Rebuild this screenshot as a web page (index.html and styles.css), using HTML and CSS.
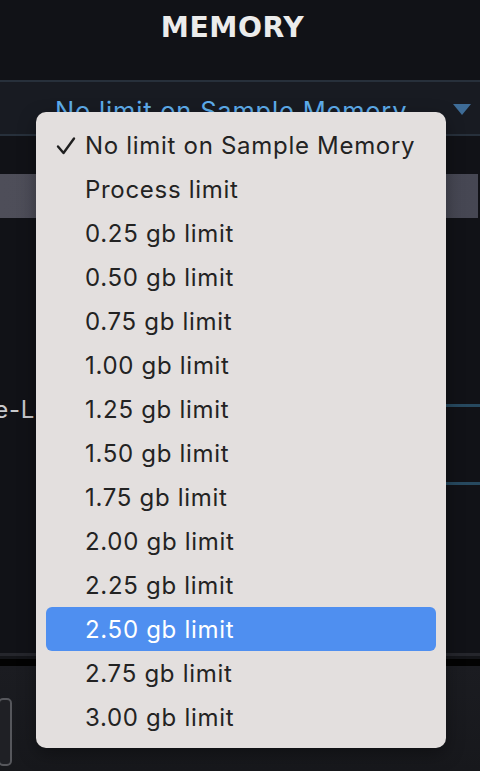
FILE: index.html
```html
<!DOCTYPE html>
<html>
<head>
<meta charset="utf-8">
<link rel="stylesheet" href="styles.css">
</head>
<body>
<div class="panel">
  <header class="header"><h1 class="title">MEMORY</h1></header>
  <div class="select-row">
    <span class="select-value">No limit on Sample Memory</span>
    <svg class="select-arrow" width="18" height="11" viewBox="0 0 18 11"><path d="M0 0 H18 L9 11 Z" fill="#3e6c97"/></svg>
  </div>
  <div class="gap-top"></div>
  <div class="section-bar"></div>
  <div class="settings">
    <div class="setting-row first">
      <span class="setting-label">Pre-Load</span>
      <span class="setting-field"></span>
    </div>
    <div class="setting-row">
      <span class="setting-label"></span>
      <span class="setting-field"></span>
    </div>
  </div>
  <div class="footer">
    <div class="footer-rule"></div>
    <div class="footer-shadow"></div>
    <div class="footer-body"><span class="footer-button"></span></div>
  </div>
</div>

<ul class="menu">
  <li class="menu-item checked"><svg class="check" width="20" height="20" viewBox="0 0 20 20"><path d="M2 10.5 L7.5 17 L18 2.5" fill="none" stroke="#1f1f1f" stroke-width="2.4" stroke-linecap="round" stroke-linejoin="round"/></svg>No limit on Sample Memory</li>
  <li class="menu-item">Process limit</li>
  <li class="menu-item">0.25 gb limit</li>
  <li class="menu-item">0.50 gb limit</li>
  <li class="menu-item">0.75 gb limit</li>
  <li class="menu-item">1.00 gb limit</li>
  <li class="menu-item">1.25 gb limit</li>
  <li class="menu-item">1.50 gb limit</li>
  <li class="menu-item">1.75 gb limit</li>
  <li class="menu-item">2.00 gb limit</li>
  <li class="menu-item">2.25 gb limit</li>
  <li class="menu-item active">2.50 gb limit</li>
  <li class="menu-item">2.75 gb limit</li>
  <li class="menu-item">3.00 gb limit</li>
</ul>
</body>
</html>
```

FILE: styles.css
```css
html, body {
  margin: 0;
  padding: 0;
  width: 480px;
  height: 771px;
  overflow: hidden;
  background: #111217;
}

.panel {
  display: flex;
  flex-direction: column;
  height: 771px;
}

/* title bar */
.header {
  height: 80px;
  display: flex;
  justify-content: center;
  align-items: flex-start;
  padding-right: 15px;
  background: #111217;
}

.title {
  margin: 12px 0 0 0;
  font-family: "DejaVu Sans", sans-serif;
  font-weight: 700;
  font-size: 29px;
  line-height: 30px;
  letter-spacing: 0.5px;
  color: #ececec;
  transform: scaleX(0.975);
}

/* the closed popup button */
.select-row {
  height: 52px;
  border-top: 2px solid #27303b;
  border-bottom: 2px solid #27303b;
  background: #181b22;
  display: flex;
  align-items: center;
  padding-left: 55px;
  padding-right: 9px;
}

.select-value {
  flex: 1;
  font-family: "Inter", "Liberation Sans", sans-serif;
  font-size: 25.5px;
  letter-spacing: 0.8px;
  color: #5eadec;
  padding-top: 4px;
}

.select-arrow {
  margin-top: 2px;
}

.gap-top {
  height: 38px;
}

.section-bar {
  height: 44px;
  width: 478px;
  background: linear-gradient(90deg, #4e4e59, #464753);
}

/* option rows below */
.settings {
  flex: 1;
  display: flex;
  flex-direction: column;
  padding-top: 186px;
}

.setting-row {
  height: 78px;
  display: flex;
  justify-content: space-between;
  align-items: flex-start;
}

.setting-label {
  font-family: "Inter", "Liberation Sans", sans-serif;
  font-size: 24px;
  letter-spacing: 0.7px;
  color: #c9c9cc;
  margin-left: -31px;
  margin-top: -9px;
}

.setting-field {
  width: 34px;
  height: 3px;
  background: #27495f;
}

.footer {
  display: flex;
  flex-direction: column;
  height: 118px;
}

.footer-rule {
  height: 3px;
  background: #25262c;
}

.footer-shadow {
  height: 3px;
  background: #141519;
  border-bottom: 7px solid #030303;
}

.footer-body {
  flex: 1;
  background: linear-gradient(180deg, #1b1c21, #17181c);
  padding-top: 32px;
}

.footer-button {
  display: block;
  width: 10px;
  height: 64px;
  margin-left: -2px;
  border: 2px solid #56575c;
  border-radius: 5px;
  background: #1f2025;
}

/* the open popup menu */
.menu {
  position: absolute;
  left: 36px;
  top: 112px;
  width: 410px;
  height: 636px;
  box-sizing: border-box;
  margin: 0;
  padding: 11px 10px 9px 10px;
  list-style: none;
  background: #e3dfde;
  border-radius: 10px;
  box-shadow: 0 6px 18px rgba(0, 0, 0, 0.35);
}

.menu-item {
  position: relative;
  height: 44px;
  display: flex;
  align-items: center;
  padding-left: 39px;
  font-family: "Inter", "Liberation Sans", sans-serif;
  font-size: 24px;
  letter-spacing: 0.7px;
  color: #232323;
  border-radius: 6px;
}

.menu-item.active {
  background: #4f8ff0;
  color: #ffffff;
}

.check {
  position: absolute;
  left: 10px;
  top: 13px;
}
```
